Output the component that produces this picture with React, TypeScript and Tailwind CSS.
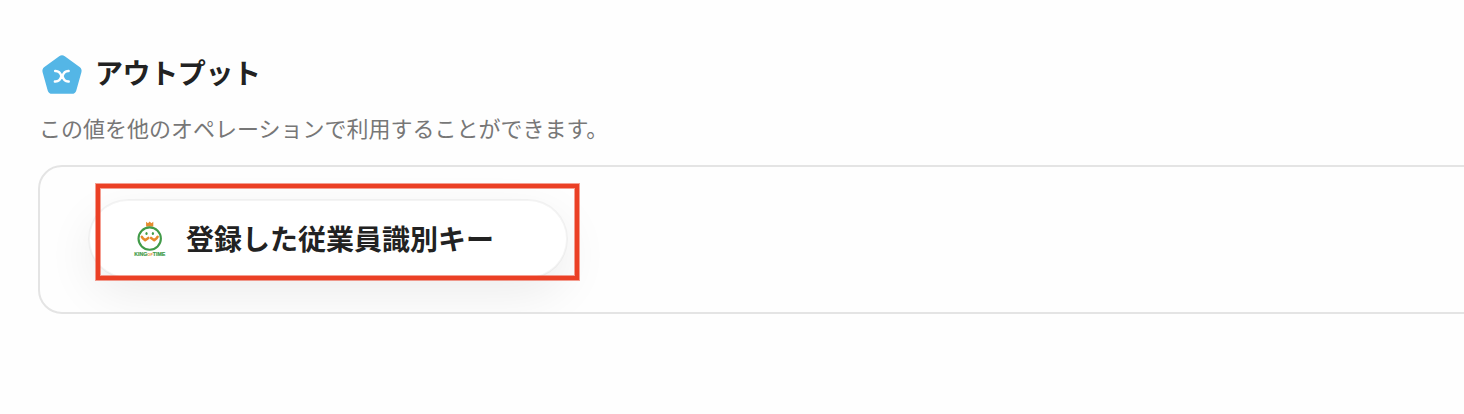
function OutputBadge() {
  return (
    <svg width="42" height="42" viewBox="0 0 42 42" fill="none" aria-hidden="true">
      <path
        d="M18.200 2.300Q21 .4 23.800 2.300L38.600 12.900Q41.300 15 40.400 18.200L35.300 36.400Q34.200 39.800 31 39.800H11Q7.800 39.800 6.700 36.400L1.600 18.200Q.700 15 3.400 12.900Z"
        fill="#54b6e6"
      />
      <path
        d="M14.200 16.900C18.200 16.700 19.500 19 20.400 22C19.600 25.300 18 27.800 13.900 27.500M27.600 16.900C23.800 16.700 22.400 19 21.500 22C22.300 25.300 23.800 27.800 27.700 27.500"
        stroke="#fff"
        strokeWidth="2.500"
        strokeLinecap="round"
        strokeLinejoin="round"
      />
    </svg>
  );
}

function KingOfTimeLogo() {
  return (
    <svg width="34" height="38" viewBox="0 0 34 38" fill="none" className="mt-[2px] shrink-0">
      <path d="M13.100 .8L15 2.300L16.700 .5L18.400 2.300L20.300 .8V5.400H13.100Z" fill="#e58a2e" />
      <circle cx="16.700" cy="17.600" r="11.200" stroke="#429b49" strokeWidth="2.100" />
      <ellipse cx="13.500" cy="12.500" rx="1.100" ry="1.600" fill="#429b49" />
      <ellipse cx="19.900" cy="12.500" rx="1.100" ry="1.600" fill="#429b49" />
      <path
        d="M8.800 15.800L9.800 17.200L12.200 19.200L15.300 16.900M24.600 15.800L23.600 17.200L21.200 19.200L18.100 16.900"
        stroke="#e58a2e"
        strokeWidth="2.500"
        strokeLinejoin="round"
        strokeLinecap="round"
      />
      <text
        x="1.300"
        y="35.400"
        textLength="31"
        lengthAdjust="spacingAndGlyphs"
        fill="#429b49"
        stroke="#429b49"
        strokeWidth=".2"
        fontFamily="Liberation Sans, sans-serif"
        fontSize="5.300"
        fontWeight="700"
      >
        KING<tspan fill="#e58a2e" stroke="none" fontSize="4">OF</tspan>TIME
      </text>
    </svg>
  );
}

export default function App() {
  return (
    <main className="h-[414px] w-full overflow-hidden bg-[#fefefe] pl-[38px] pt-[54px] font-['Noto_Sans_CJK_JP',sans-serif]">
      <header className="flex h-[42px] items-center gap-[12px] pl-[3px]">
        <OutputBadge />
        <h1 className="-mt-[6px] whitespace-nowrap text-[28px] font-bold leading-[40px] tracking-[-0.4px] text-[#222]">
          アウトプット
        </h1>
      </header>
      <p className="mt-[15px] h-[34px] whitespace-nowrap pl-px text-[22px] leading-[32px] text-[#777]">
        この値を他のオペレーションで利用することができます。
      </p>
      <section className="relative mt-[20px] h-[149px] w-[1500px] overflow-hidden rounded-[24px] border-2 border-[#e4e4e4] pl-[48px] pt-[32px]">
        <div className="flex h-[80px] w-[480px] items-center rounded-full border-2 border-black/4 bg-white bg-clip-padding pl-[43px] shadow-[0_16px_48px_rgba(0,0,0,0.07)]">
          <KingOfTimeLogo />
          <span className="-mt-[2px] ml-[19px] whitespace-nowrap text-[28px] font-bold leading-[40px] text-[#222]">
            登録した従業員識別キー
          </span>
        </div>
        <div className="absolute left-[55px] top-[16px] h-[98px] w-[485px] border-6 border-[#eb4025]/50">
          <div className="-m-[5px] h-[96px] w-[483px] border-4 border-[#eb4025]" />
        </div>
      </section>
    </main>
  );
}
